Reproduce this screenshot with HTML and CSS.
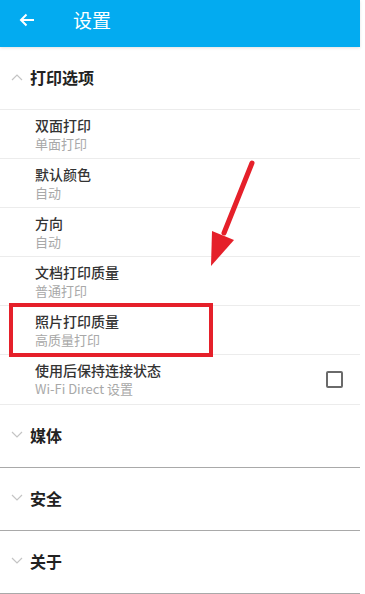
FILE: index.html
```
<!DOCTYPE html>
<html>
<head>
<meta charset="utf-8">
<link rel="stylesheet" href="styles.css">
</head>
<body>
<div class="app">
  <header class="topbar">
    <svg class="back" width="18" height="16" viewBox="0 0 18 16"><path d="M16 8H3M8.5 2.5L3 8l5.5 5.5" fill="none" stroke="#fff" stroke-width="2"/></svg>
    <span class="title">设置</span>
  </header>

  <section class="group open">
    <div class="group-head">
      <svg class="chev" width="12" height="8" viewBox="0 0 12 8"><path d="M1 7L6 2l5 5" fill="none" stroke="#c4c4c4" stroke-width="1.2"/></svg>
      <span>打印选项</span>
    </div>
    <div class="item"><div class="t">双面打印</div><div class="s">单面打印</div></div>
    <div class="item"><div class="t">默认颜色</div><div class="s">自动</div></div>
    <div class="item"><div class="t">方向</div><div class="s">自动</div></div>
    <div class="item"><div class="t">文档打印质量</div><div class="s">普通打印</div></div>
    <div class="item"><div class="t">照片打印质量</div><div class="s">高质量打印</div></div>
    <div class="item check-item">
      <div><div class="t">使用后保持连接状态</div><div class="s">Wi-Fi Direct 设置</div></div>
      <span class="box"></span>
    </div>
  </section>

  <section class="group closed">
    <div class="group-head">
      <svg class="chev" width="12" height="8" viewBox="0 0 12 8"><path d="M1 1l5 5 5-5" fill="none" stroke="#c4c4c4" stroke-width="1.2"/></svg>
      <span>媒体</span>
    </div>
  </section>
  <section class="group closed">
    <div class="group-head">
      <svg class="chev" width="12" height="8" viewBox="0 0 12 8"><path d="M1 1l5 5 5-5" fill="none" stroke="#c4c4c4" stroke-width="1.2"/></svg>
      <span>安全</span>
    </div>
  </section>
  <section class="group closed">
    <div class="group-head">
      <svg class="chev" width="12" height="8" viewBox="0 0 12 8"><path d="M1 1l5 5 5-5" fill="none" stroke="#c4c4c4" stroke-width="1.2"/></svg>
      <span>关于</span>
    </div>
  </section>

  <svg class="annot" width="365" height="594" viewBox="0 0 365 594">
    <rect x="11" y="305" width="200" height="50" fill="none" stroke="#e5202a" stroke-width="4"/>
    <path d="M252 163L224 233" stroke="#e5202a" stroke-width="5" stroke-linecap="round"/>
    <path d="M211 266L212 231L234 240Z" fill="#e5202a"/>
  </svg>
</div>
</body>
</html>
```
FILE: styles.css
```
* { box-sizing: border-box; }
html, body { margin: 0; padding: 0; background: #fff; }
body { font-family: "Noto Sans CJK SC", "Noto Sans", sans-serif; }
.app { position: relative; width: 360px; }
.topbar {
  height: 47px;
  background: #03abf0;
  display: flex;
  align-items: flex-start;
  padding-top: 7px;
  box-shadow: 0 1px 3px rgba(0,0,0,0.12);
}
.back { margin-left: 18px; margin-top: 5px; }
.title { margin-left: 37px; color: #fff; font-size: 19px; line-height: 26px; }
.group-head {
  height: 63px;
  display: flex;
  align-items: center;
  padding-left: 11px;
  padding-bottom: 2px;
  font-size: 16px;
  font-weight: bold;
  color: #222;
}
.chev { margin-right: 7px; }
.open .group-head { border-bottom: 1px solid #ececec; }
.closed .group-head { border-bottom: 1px solid #a9a9a9; }
.item {
  height: 49px;
  padding: 6px 0 0 35px;
  border-bottom: 1px solid #ececec;
}
.t { font-size: 14px; line-height: 19px; color: #333; font-weight: 500; }
.s { font-size: 13px; line-height: 18px; color: #a8a8a8; }
.check-item { display: flex; justify-content: space-between; height: 50px; }
.box {
  width: 17px; height: 17px;
  border: 2px solid #6a6a6a;
  border-radius: 2px;
  margin: 10px 17px 0 0;
}
.annot { position: absolute; left: 0; top: 0; pointer-events: none; }
```
